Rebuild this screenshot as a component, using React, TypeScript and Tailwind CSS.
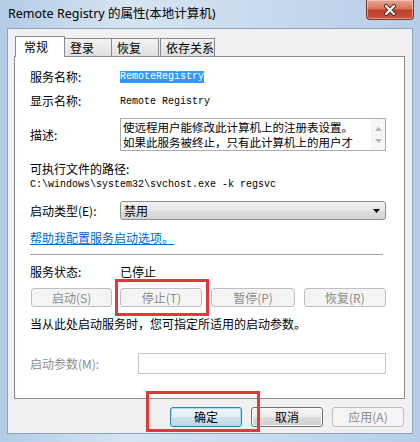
import React from "react";

const cjk = "font-['Noto_Sans_CJK_SC','Noto_Sans',sans-serif]";
const mono = "font-['Liberation_Mono','Noto_Sans_CJK_SC',monospace]";

function DisabledButton({ label, className = "" }: { label: string; className?: string }) {
  return (
    <div
      className={`h-[19px] flex items-center justify-center rounded-[3px] border border-[#bcbfc3] bg-[#f4f4f4] text-[12px] leading-none text-[#8b8b8b] ${className}`}
    >
      {label}
    </div>
  );
}

function Button({ label, focused = false, disabled = false }: { label: string; focused?: boolean; disabled?: boolean }) {
  if (disabled) {
    return (
      <div className="w-[72px] h-[20px] flex items-center justify-center rounded-[3px] border border-[#bcbfc3] bg-[#f4f4f4] text-[12px] text-[#8b8b8b]">
        {label}
      </div>
    );
  }
  return (
    <div
      className={`w-[72px] h-[20px] flex items-center justify-center rounded-[3px] border text-[12px] text-black ${
        focused
          ? "border-[#3c7fb1] bg-[linear-gradient(to_bottom,#f0f6fa_0%,#e3eef6_50%,#cfe2ee_51%,#c1d9ea_100%)] shadow-[inset_0_0_0_1px_#a6ddf2]"
          : "border-[#707070] bg-[linear-gradient(to_bottom,#f6f6f6_0%,#ebebeb_50%,#dddddd_51%,#cfcfcf_100%)] shadow-[inset_0_0_0_1px_#fbfbfb]"
      }`}
    >
      {label}
    </div>
  );
}

function Tab({ label, active = false, className = "" }: { label: string; active?: boolean; className?: string }) {
  return active ? (
    <div
      className={`relative z-10 h-[21px] -mb-px pl-[8px] flex items-center border border-b-0 border-[#898c95] bg-white text-[12px] text-black ${className}`}
    >
      {label}
    </div>
  ) : (
    <div
      className={`h-[18px] mt-[2px] pl-[5px] flex items-center border border-b-0 border-[#898c95] bg-[linear-gradient(to_bottom,#f3f3f3,#e0e0e0)] text-[12px] text-black ${className}`}
    >
      {label}
    </div>
  );
}

export default function App() {
  return (
    <div
      className={`w-[420px] h-[442px] flex flex-col overflow-hidden ${cjk} bg-[linear-gradient(to_right,#b3cbe5_0%,#d6e4f2_30%,#c9dbee_60%,#b5cde6_100%)]`}
    >
      {/* Title bar */}
      <div className="h-[28px] flex items-start shrink-0">
        <div className="pl-[8px] pt-[5px] text-[12.5px] leading-[18px] text-black font-['Noto_Sans','Noto_Sans_CJK_SC',sans-serif]">
          Remote Registry 的属性(本地计算机)
        </div>
        <div className="ml-auto mr-[6px] w-[48px] h-[20px] flex items-center justify-center rounded-b-[4px] border border-t-0 border-[#7b3a30] bg-[linear-gradient(to_bottom,#e7a897_0%,#d8735d_45%,#c2402a_55%,#c9543c_100%)] shadow-[inset_0_0_0_1px_rgba(255,220,210,0.5)]">
          <svg width="14" height="12" viewBox="0 0 14 12">
            <path d="M3 2 L11 10 M11 2 L3 10" stroke="#4a2a25" strokeWidth="4" strokeLinecap="round" />
            <path d="M3 2 L11 10 M11 2 L3 10" stroke="#ffffff" strokeWidth="2.2" strokeLinecap="round" />
          </svg>
        </div>
      </div>

      {/* Client area */}
      <div className="mx-[7px] h-[406px] shrink-0 border border-[#8fa3bb] bg-[#f0f0f0] flex flex-col">
        {/* Tabs */}
        <div className="flex items-end pl-[7px] pt-[7px]">
          <Tab label="常规" active className="w-[50px]" />
          <Tab label="登录" className="w-[48px] -ml-px" />
          <Tab label="恢复" className="w-[48px] -ml-px" />
          <Tab label="依存关系" className="w-[55px] ml-[1px]" />
        </div>

        {/* Tab panel */}
        <div className="ml-[6px] w-[391px] h-[343px] border border-[#898c95] bg-white flex flex-col pl-[15px] pr-[18px] text-[12px] text-black">
          <div className="mt-[12px] h-[16px] flex items-center">
            <div className="w-[90px]">服务名称:</div>
            <div className={`${mono} text-[10px] leading-[12px] bg-[#3399ff] text-white`}>RemoteRegistry</div>
          </div>

          <div className="mt-[8px] h-[16px] flex items-center">
            <div className="w-[90px]">显示名称:</div>
            <div className={`${mono} text-[10px]`}>Remote Registry</div>
          </div>

          <div className="mt-[9px] h-[33px] flex items-center">
            <div className="w-[90px]">描述:</div>
            <div className="flex-1 h-[33px] border border-[#abadb3] flex">
              <div className="flex-1 pl-[2px] pt-[1px] text-[11.5px] leading-[15px] overflow-hidden">
                <div className="h-[15px] whitespace-nowrap">使远程用户能修改此计算机上的注册表设置。</div>
                <div className="h-[15px] whitespace-nowrap">如果此服务被终止，只有此计算机上的用户才</div>
              </div>
              <div className="w-[14px] flex flex-col items-center justify-center gap-[8px] bg-[#f6f6f6]">
                <svg width="7" height="4" viewBox="0 0 7 4">
                  <path d="M0 4 L3.5 0 L7 4 Z" fill="#b4b4b4" />
                </svg>
                <svg width="7" height="4" viewBox="0 0 7 4">
                  <path d="M0 0 L3.5 4 L7 0 Z" fill="#b4b4b4" />
                </svg>
              </div>
            </div>
          </div>

          <div className="mt-[10px] h-[16px] flex items-center">可执行文件的路径:</div>
          <div className={`h-[14px] flex items-center ${mono} text-[10px]`}>
            C:\windows\system32\svchost.exe -k regsvc
          </div>

          <div className="mt-[10px] h-[19px] flex items-center">
            <div className="w-[90px]">启动类型(E):</div>
            <div className="flex-1 h-[19px] flex items-center rounded-[3px] border border-[#8e8f8f] bg-[linear-gradient(to_bottom,#f2f2f2,#e6e6e6_50%,#dddddd_51%,#d5d5d5)] pl-[3px] pr-[5px]">
              <span className="flex-1">禁用</span>
              <svg width="7" height="4" viewBox="0 0 7 4">
                <path d="M0 0 L3.5 4 L7 0 Z" fill="#000" />
              </svg>
            </div>
          </div>

          <div className="mt-[10px] h-[16px] flex items-center">
            <span className="text-[#0066cc] underline">帮助我配置服务启动选项。</span>
          </div>

          <div className="mt-[8px] h-px bg-[#a0a0a0] mr-[3px]" />

          <div className="mt-[9px] h-[16px] flex items-center">
            <div className="w-[90px]">服务状态:</div>
            <div>已停止</div>
          </div>

          <div className="mt-[8px] flex items-center">
            <DisabledButton label="启动(S)" className="ml-px w-[82px]" />
            <div className="relative ml-[8px]">
              <DisabledButton label="停止(T)" className="w-[82px]" />
              <div className="absolute -left-[5px] -right-[7px] -top-[9px] -bottom-[9px] border-[3px] border-[#e2373b]" />
            </div>
            <DisabledButton label="暂停(P)" className="ml-[9px] w-[84px]" />
            <DisabledButton label="恢复(R)" className="ml-[9px] w-[83px]" />
          </div>

          <div className="mt-[9px] h-[16px] flex items-center">当从此处启动服务时，您可指定所适用的启动参数。</div>

          <div className="mt-[21px] h-[21px] flex items-center">
            <div className="w-[108px] text-[#8d8d8d]">启动参数(M):</div>
            <div className="flex-1 h-[21px] border border-[#c5c5c5] bg-white" />
          </div>
        </div>

        {/* Bottom buttons */}
        <div className="mt-[8px] flex items-center justify-end gap-[9px] pr-[8px]">
          <div className="relative">
            <Button label="确定" focused />
            <div className="absolute -left-[24px] -right-[18px] -top-[16px] -bottom-[5px] border-[3px] border-[#e2373b]" />
          </div>
          <Button label="取消" />
          <Button label="应用(A)" disabled />
        </div>
      </div>
    </div>
  );
}
